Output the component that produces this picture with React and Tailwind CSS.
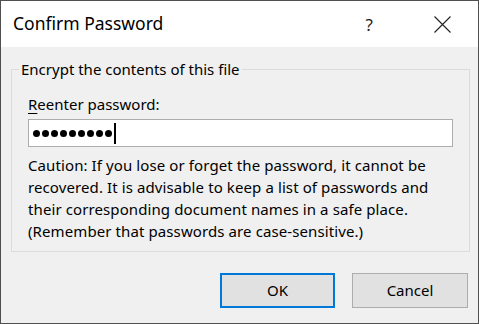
import React from "react";

export default function App() {
  const font = { fontFamily: '"Noto Sans", "Segoe UI", sans-serif' };
  const dots = [0, 1, 2, 3, 4, 5, 6, 7, 8];
  return (
    <div
      className="w-[479px] h-[324px] border border-[#505050] bg-[#f0f0f0] flex flex-col text-[#000] overflow-hidden"
      style={font}
    >
      <div className="h-[46px] bg-white flex items-center shrink-0">
        <span className="ml-[12px] text-[17.5px] leading-none text-[#000]">Confirm Password</span>
        <span className="ml-auto text-[17px] leading-none text-[#222] mr-[61px]">?</span>
        <svg width="17" height="17" viewBox="0 0 17 17" className="mr-[27px]">
          <path d="M0.5 0.5 L16.5 16.5 M16.5 0.5 L0.5 16.5" stroke="#222" strokeWidth="1.1" fill="none" />
        </svg>
      </div>
      <div className="px-[10px] pt-[12px]">
        <fieldset className="border border-[#dcdcdc] px-[16px] pb-[9px] ml-0 mr-[-1px]">
          <legend className="ml-[-9px] px-[2px] text-[15px] leading-[20px]">Encrypt the contents of this file</legend>
          <div className="mt-[15px] text-[15px] leading-[20px]">
            <span className="underline underline-offset-[3px]">R</span>eenter password:
          </div>
          <div className="mt-[5px] h-[28px] w-[425px] bg-white border border-[#adadad] flex items-center pl-[4px]">
            <div className="flex items-center gap-[2px]" aria-label="password">
              {dots.map((i) => (
                <span key={i} className="w-[7px] h-[7px] rounded-full bg-black"></span>
              ))}
            </div>
            <span className="w-[2px] h-[21px] bg-black ml-[2px]"></span>
          </div>
          <p className="mt-[7px] text-[15px] leading-[22px] pr-[4px] tracking-[0.1px]">
            Caution: If you lose or forget the password, it cannot be recovered. It is advisable to keep a list of passwords and their corresponding document names in a safe place. (Remember that passwords are case-sensitive.)
          </p>
        </fieldset>
      </div>
      <div className="flex justify-end gap-[17px] pr-[10px] mt-[21px]">
        <button className="w-[115px] h-[35px] border-2 border-[#0078d7] bg-[#e1e1e1] text-[15px] text-black">OK</button>
        <button className="w-[116px] h-[35px] border border-[#adadad] bg-[#e1e1e1] text-[15px] text-black">Cancel</button>
      </div>
    </div>
  );
}
